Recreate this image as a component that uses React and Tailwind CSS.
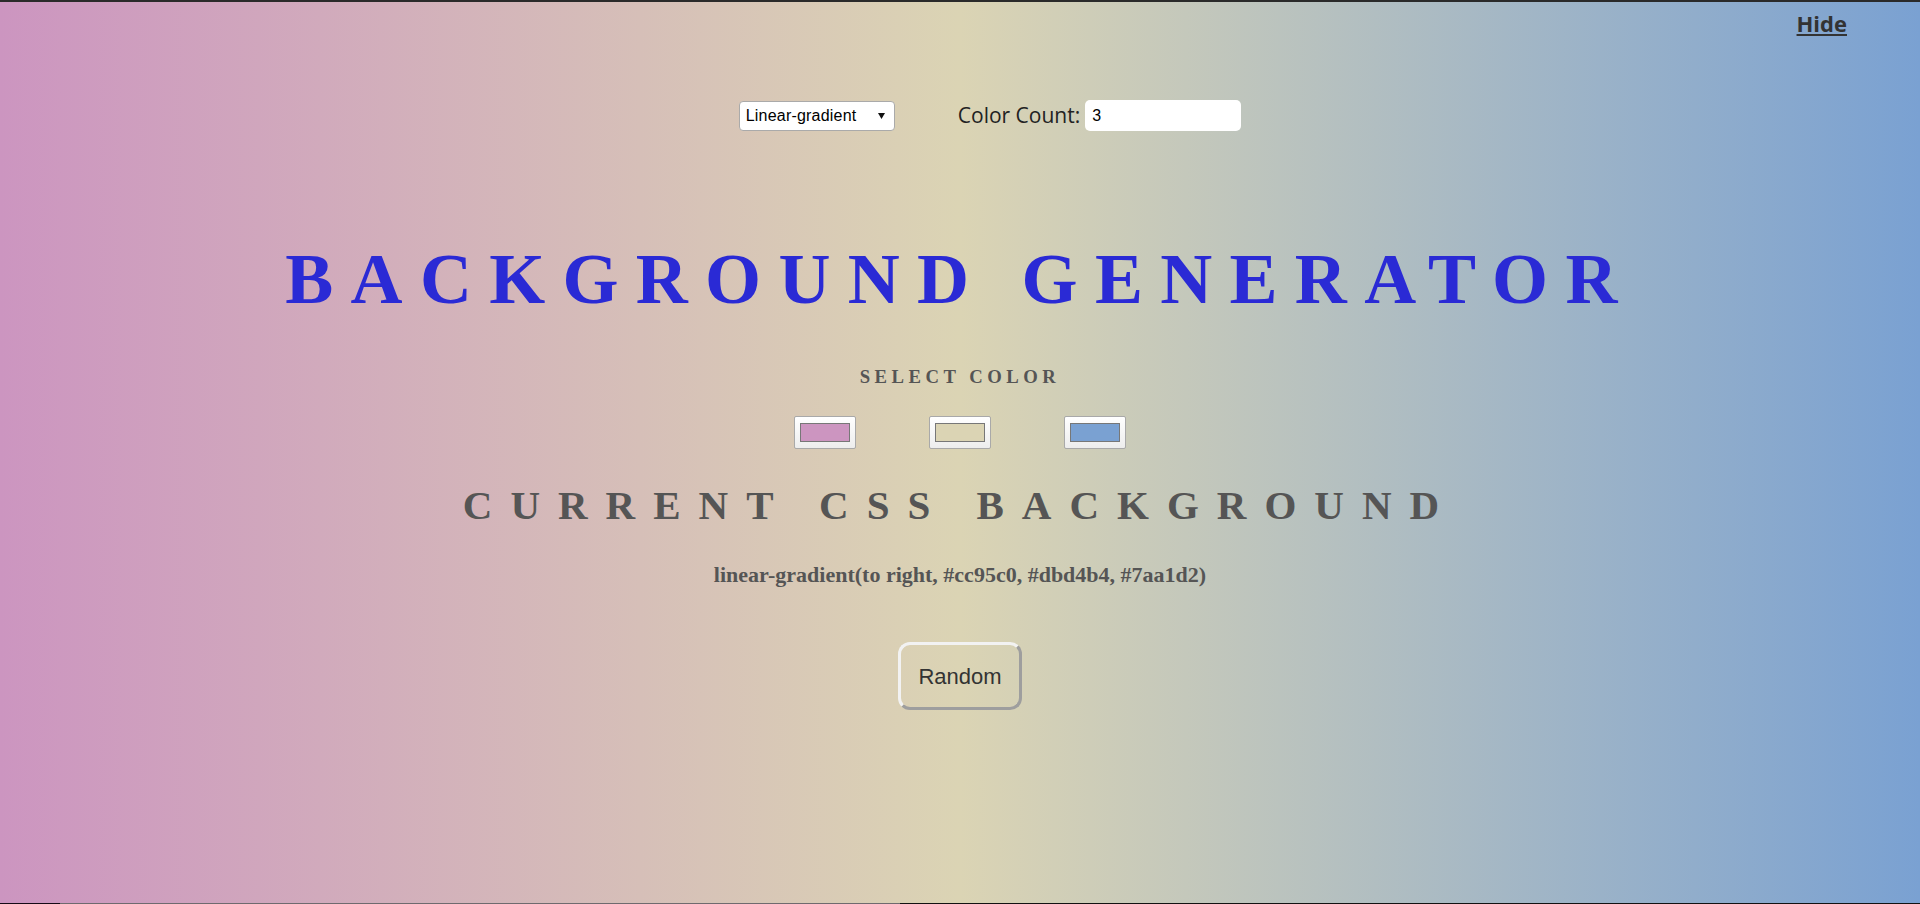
import React from "react";

function Swatch({ color }) {
  return (
    <div className="w-[62px] h-[33px] px-[5px] py-[6px] border border-[#a9a9a9] rounded-[2px] bg-[linear-gradient(to_bottom,#ffffff,#ededed)]">
      <div className="w-full h-full border border-[#777777]" style={{ backgroundColor: color }} />
    </div>
  );
}

export default function App() {
  return (
    <div className="h-screen w-full flex flex-col bg-[linear-gradient(to_right,#cc95c0,#dbd4b4,#7aa1d2)] overflow-hidden">
      <div className="h-[2px] bg-[#2a2a2a] shrink-0" />

      <div className="flex justify-end pr-[73px] pt-[10px] shrink-0">
        <button className="h-[22px] leading-none text-[22px] font-bold text-[#333333] underline decoration-2 underline-offset-[2px] font-['Open_Sans',sans-serif]">
          Hide
        </button>
      </div>

      <div className="mt-[66px] h-[31px] flex items-center justify-center pl-[60px] shrink-0">
        <div className="w-[156px] h-[30px] bg-white border border-[#aaaaaa] rounded-[4px] flex items-center justify-between pl-[6px] pr-[9px] font-['Liberation_Sans',Arial,sans-serif] text-[16px] text-black">
          <span className="tracking-[0.2px]">Linear-gradient</span>
          <svg width="7" height="6" viewBox="0 0 7 6">
            <path d="M0 0 L7 0 L3.5 6 Z" fill="#111" />
          </svg>
        </div>
        <span className="ml-[63px] text-[21px] text-[#222222] font-['Open_Sans',sans-serif] leading-none">
          Color Count:
        </span>
        <div className="ml-[5px] w-[156px] h-[31px] bg-white rounded-[5px] flex items-center pl-[7px] font-['Liberation_Sans',Arial,sans-serif] text-[16px] text-black">
          3
        </div>
      </div>

      <h1 className="mt-[112px] h-[72px] leading-none text-center text-[72px] font-bold tracking-[17.3px] text-[#2a2ad5] font-['Liberation_Serif','Times_New_Roman',serif] shrink-0 whitespace-nowrap">
        BACKGROUND GENERATOR
      </h1>

      <h3 className="mt-[53px] h-[19px] leading-none text-center text-[18.72px] font-bold tracking-[4.5px] text-[#555555] font-['Liberation_Serif','Times_New_Roman',serif] shrink-0">
        SELECT COLOR
      </h3>

      <div className="mt-[29px] flex justify-center gap-[73px] shrink-0">
        <Swatch color="#cc95c0" />
        <Swatch color="#dbd4b4" />
        <Swatch color="#7aa1d2" />
      </div>

      <h2 className="mt-[36px] h-[41px] leading-none text-center text-[41px] font-bold tracking-[18px] text-[#555555] font-['Liberation_Serif','Times_New_Roman',serif] shrink-0 whitespace-nowrap">
        CURRENT CSS BACKGROUND
      </h2>

      <p className="mt-[38px] h-[22px] leading-none text-center text-[22px] font-bold text-[#555555] font-['Liberation_Serif','Times_New_Roman',serif] shrink-0">
        linear-gradient(to right, #cc95c0, #dbd4b4, #7aa1d2)
      </p>

      <div className="mt-[56px] flex justify-center shrink-0">
        <button className="w-[124px] h-[68px] rounded-[12px] border-[3px] border-t-[#f2f2f2] border-l-[#f2f2f2] border-b-[#9e9e9e] border-r-[#9e9e9e] bg-transparent text-[22px] text-[#333333] font-['Liberation_Sans',Arial,sans-serif]">
          Random
        </button>
      </div>

      <div className="mt-auto h-px flex shrink-0">
        <div className="w-[60px] bg-[#150a15]" />
        <div className="w-[840px] bg-[#6e6a6e]" />
        <div className="flex-1 bg-[#111111]" />
      </div>
    </div>
  );
}
